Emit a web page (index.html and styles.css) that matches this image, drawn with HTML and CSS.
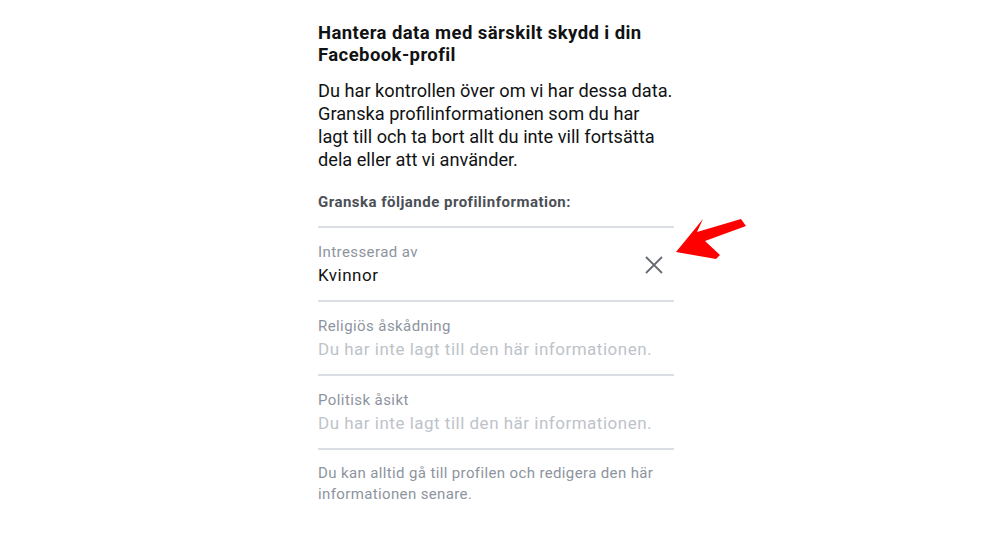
FILE: index.html
```html
<!DOCTYPE html>
<html lang="sv">
<head>
  <meta charset="UTF-8" />
  <meta name="viewport" content="width=device-width, initial-scale=1.0"/>
  <title>Hantera data med särskilt skydd</title>
  <link rel="stylesheet" href="styles.css">
</head>
<body>

<div class="panel">

  <h1>Hantera data med särskilt skydd i din Facebook-profil</h1>

  <p class="intro">Du har kontrollen över om vi har dessa data. Granska profilinformationen som du har lagt till och ta bort allt du inte vill fortsätta dela eller att vi använder.</p>

  <h2>Granska följande profilinformation:</h2>

  <ul class="fields">
    <li class="field">
      <div class="field-text">
        <div class="label">Intresserad av</div>
        <div class="value">Kvinnor</div>
      </div>
      <button class="remove" aria-label="Ta bort">
        <svg width="18" height="18" viewBox="0 0 18 18">
          <path d="M1 1 L17 17 M17 1 L1 17" stroke="#686c72" stroke-width="1.8" fill="none"/>
        </svg>
      </button>
      <svg class="arrow" width="80" height="50" viewBox="0 0 80 50">
        <polygon points="0,42 27,9 21,22 65,9 70,16 29,31 44,45 40,49" fill="#f00"/>
      </svg>
    </li>
    <li class="field">
      <div class="field-text">
        <div class="label">Religiös åskådning</div>
        <div class="value empty">Du har inte lagt till den här informationen.</div>
      </div>
    </li>
    <li class="field">
      <div class="field-text">
        <div class="label">Politisk åsikt</div>
        <div class="value empty">Du har inte lagt till den här informationen.</div>
      </div>
    </li>
  </ul>

  <p class="note">Du kan alltid gå till profilen och redigera den här informationen senare.</p>

</div>

</body>
</html>
```

FILE: styles.css
```css
:root {
  --text: #111213;
  --sub: #4b4f56;
  --muted: #8d949e;
  --faint: #bec3c9;
  --line: #dadde1;
}
* {
  box-sizing: border-box;
}
body {
  margin: 0;
  background: #fff;
  font-family: Roboto, 'Noto Sans', sans-serif;
  color: var(--text);
}
.panel {
  width: 356px;
  margin: 0 auto;
  padding-top: 22px;
}
h1 {
  margin: 0;
  font-size: 18.5px;
  line-height: 22px;
  font-weight: bold;
  letter-spacing: 0.42px;
}
.intro {
  margin: 13px 0 0;
  font-size: 18.2px;
  line-height: 23px;
}
h2 {
  margin: 21px 0 0;
  font-size: 15px;
  line-height: 20px;
  font-weight: bold;
  letter-spacing: 0.48px;
  color: var(--sub);
}
.fields {
  list-style: none;
  margin: 14px 0 0;
  padding: 0;
  border-top: 2px solid var(--line);
}
.field {
  position: relative;
  display: flex;
  align-items: center;
  padding: 13px 0 13px;
  border-bottom: 2px solid var(--line);
}
.field-text {
  flex: 1;
}
.label {
  font-size: 15px;
  line-height: 22px;
  letter-spacing: 0.42px;
  color: var(--muted);
}
.value {
  font-size: 17px;
  line-height: 24px;
  letter-spacing: 0.5px;
}
.value.empty {
  color: var(--faint);
}
.remove {
  background: none;
  border: none;
  padding: 0;
  margin: 2px 11px 0 0;
  width: 18px;
  height: 18px;
  cursor: pointer;
}
.remove svg {
  display: block;
}
.arrow {
  position: absolute;
  left: 358px;
  top: -18px;
}
.note {
  margin: 13px 0 0;
  font-size: 15px;
  line-height: 21px;
  letter-spacing: 0.37px;
  color: var(--muted);
}
```
